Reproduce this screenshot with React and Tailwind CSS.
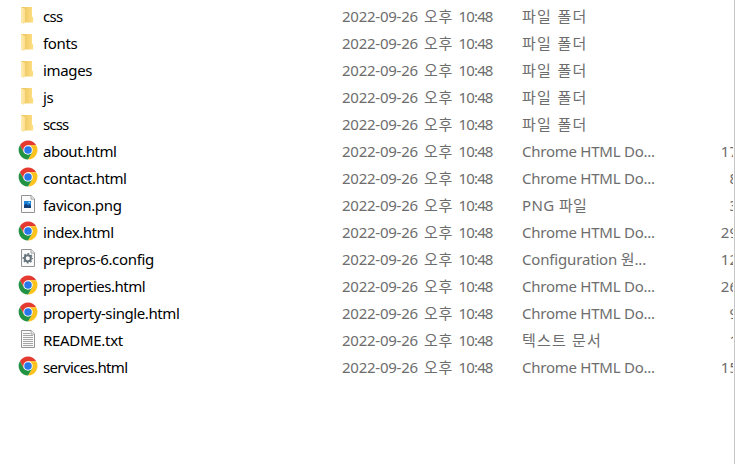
import React from "react";

function FolderIcon() {
  return (
    <svg width="20" height="20" viewBox="0 0 20 20" className="block">
      <defs>
        <linearGradient id="folderBack" x1="0" y1="0" x2="1" y2="0">
          <stop offset="0" stopColor="#e8c25a" />
          <stop offset="1" stopColor="#ffdf83" />
        </linearGradient>
        <linearGradient id="folderFront" x1="0" y1="0" x2="1" y2="0">
          <stop offset="0" stopColor="#ffebae" />
          <stop offset="1" stopColor="#fce092" />
        </linearGradient>
      </defs>
      <path d="M3 2h11v9.4l1.1 1v5H3z" fill="url(#folderBack)" />
      <path d="M3 2l4 1.9v13.1l-1 2.1L3 17.2z" fill="url(#folderFront)" />
    </svg>
  );
}

function ChromeIcon() {
  return (
    <svg width="20" height="20" viewBox="0 0 48 48" className="block">
      <path d="M4.6 12.5A22.8 22.8 0 0 1 43.7 12.6L24 12.6L14.1 29.7z" fill="#e53a30" />
      <path d="M43.7 12.6A22.8 22.8 0 0 1 24 46.8L33.9 29.7L24 12.6z" fill="#fcc31e" />
      <path d="M24 46.8A22.8 22.8 0 0 1 4.6 12.5L14.1 29.7L33.9 29.7z" fill="#229342" />
      <circle cx="24" cy="24" r="11.4" fill="#fff" />
      <circle cx="24" cy="24" r="9" fill="#2878ec" />
    </svg>
  );
}

function Page({ children }) {
  return (
    <svg width="20" height="20" viewBox="0 0 20 20" className="block">
      <path d="M3.5 1.5h9.7l3.3 3.3v13.7h-13z" fill="#fafafa" stroke="#929292" />
      <path d="M13 1.5v3.6h3.5" fill="#eee" stroke="#929292" strokeWidth=".8" />
      {children}
    </svg>
  );
}

function ImageIcon() {
  return (
    <Page>
      <rect x="6" y="7" width="7" height="7" fill="#1b83dc" />
      <path d="M6 14v-2.4l2-2.2 2 2 1.4-1.1 1.6 1.7V14z" fill="#123f78" />
      <rect x="10.5" y="7.8" width="1.5" height="1.3" fill="#a9dcff" />
    </Page>
  );
}

function ConfigIcon() {
  return (
    <Page>
      <circle cx="9.8" cy="10.3" r="3.1" fill="none" stroke="#64737b" strokeWidth="2" />
      <circle cx="9.8" cy="10.3" r="4.5" fill="none" stroke="#64737b" strokeWidth="1.4" strokeDasharray="1.8 1.734" strokeDashoffset=".9" />
    </Page>
  );
}

function TextIcon() {
  return (
    <Page>
      <path d="M5 4.5h7M5 6.5h10M5 8.5h10M5 10.5h10M5 12.5h10M5 14.5h10M5 16.5h10" stroke="#a5a5a5" fill="none" />
    </Page>
  );
}

const icons = { folder: FolderIcon, chrome: ChromeIcon, image: ImageIcon, config: ConfigIcon, text: TextIcon };

const folder = { label: "파일 폴더", tracking: "tracking-[1.3px]" };
const chromeDoc = { label: "Chrome HTML Do...", tracking: "tracking-[-0.25px]" };

const files = [
  { name: "css", icon: "folder", type: folder, tracking: "tracking-[-0.7px]" },
  { name: "fonts", icon: "folder", type: folder, tracking: "tracking-[-0.35px]" },
  { name: "images", icon: "folder", type: folder, tracking: "tracking-[-0.35px]" },
  { name: "js", icon: "folder", type: folder, tracking: "tracking-[-0.3px]" },
  { name: "scss", icon: "folder", type: folder, tracking: "tracking-[-0.85px]" },
  { name: "about.html", icon: "chrome", type: chromeDoc, size: "17", tracking: "tracking-[-0.45px]" },
  { name: "contact.html", icon: "chrome", type: chromeDoc, size: "8", tracking: "tracking-[-0.42px]" },
  { name: "favicon.png", icon: "image", type: { label: "PNG 파일", tracking: "tracking-[0.4px]" }, size: "3", tracking: "tracking-[-0.35px]" },
  { name: "index.html", icon: "chrome", type: chromeDoc, size: "29", tracking: "tracking-[-0.45px]" },
  { name: "prepros-6.config", icon: "config", type: { label: "Configuration 원...", tracking: "tracking-[-0.17px]" }, size: "12", tracking: "tracking-[-0.33px]" },
  { name: "properties.html", icon: "chrome", type: chromeDoc, size: "26", tracking: "tracking-[-0.5px]" },
  { name: "property-single.html", icon: "chrome", type: chromeDoc, size: "9", tracking: "tracking-[-0.4px]" },
  { name: "README.txt", icon: "text", type: { label: "텍스트 문서", tracking: "tracking-[1.2px]" }, size: "1", tracking: "tracking-[-0.3px]" },
  { name: "services.html", icon: "chrome", type: chromeDoc, size: "15", tracking: "tracking-[-0.64px]" },
];

function Row({ file }) {
  const Icon = icons[file.icon];
  return (
    <div className="flex h-[27px] items-center whitespace-pre text-[#6d6d6d]">
      <div className="h-[23px] w-[25px] shrink-0">
        <Icon />
      </div>
      <div className={`w-[299px] shrink-0 text-black ${file.tracking}`}>{file.name}</div>
      <div className="flex w-[180px] shrink-0">
        <span className="w-[82px] tracking-[-0.25px]">2022-09-26</span>
        <span className="w-[34.5px] tracking-[0.7px]">오후</span>
        <span className="tracking-[-0.85px]">10:48</span>
      </div>
      <div className={`w-[160px] shrink-0 ${file.type.tracking}`}>{file.type.label}</div>
      <div className="flex w-[56px] shrink-0 justify-end">{file.size}</div>
    </div>
  );
}

export default function App() {
  return (
    <main className="flex h-[464px] w-[735px] overflow-hidden bg-white font-['Noto_Sans','Noto_Sans_CJK_KR',sans-serif] text-[15px] leading-[27px]">
      <div className="w-[733px] shrink-0 overflow-hidden pt-[3px] pl-[18px]">
        {files.map((file) => (
          <Row key={file.name} file={file} />
        ))}
      </div>
      <div className="ml-px w-px bg-[#c6c6c6]" />
    </main>
  );
}
